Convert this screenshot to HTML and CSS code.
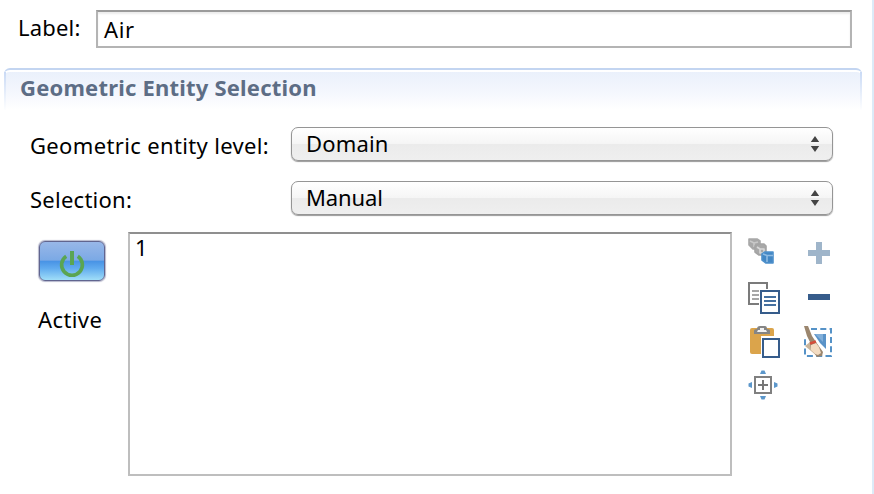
FILE: index.html
```html
<!DOCTYPE html>
<html lang="en">
<head>
<meta charset="utf-8">
<title>Geometric Entity Selection</title>
<link rel="stylesheet" href="styles.css">
</head>
<body>
<main class="panel">
  <div class="label-row">
    <span class="label-name">Label:</span>
    <div class="label-field"><span>Air</span></div>
  </div>
  <section class="section">
    <h2 class="section-title"><span>Geometric Entity Selection</span></h2>
    <div class="form-row">
      <span class="form-label level">Geometric entity level:</span>
      <div class="select"><span class="domain">Domain</span>
        <svg width="10" height="18" viewBox="0 0 10 18"><path d="M5 1L9.2 7H.8zM5 17L9.2 11H.8z" fill="#444"/></svg></div>
    </div>
    <div class="form-row">
      <span class="form-label selection">Selection:</span>
      <div class="select"><span class="manual">Manual</span>
        <svg width="10" height="18" viewBox="0 0 10 18"><path d="M5 1L9.2 7H.8zM5 17L9.2 11H.8z" fill="#444"/></svg></div>
    </div>
    <div class="selection-body">
      <div class="active">
        <div class="power">
          <svg width="28" height="30" viewBox="0 0 28 30" fill="none" stroke="#5aa552"><path d="M8.2 7.2A10.4 10.4 0 1 0 19.8 7.2" stroke-width="3.6"/><path d="M14 2V16" stroke-width="4"/></svg>
        </div>
        <span class="active-text">Active</span>
      </div>
      <div class="list">1</div>
      <div class="tools">
        <svg width="34" height="34" viewBox="0 0 34 34">
          <g stroke-width="1.6" stroke-linejoin="round">
            <path d="M2 2H10L13 4V10L10 12H6L2 8z" fill="#a8a8a8" stroke="#a8a8a8"/><path d="M3 4L7 6L11 5M7 6V10" stroke="#c8c8c8" fill="none"/>
            <path d="M8 9L12 7H17L19 9V16L16 18H12L8 15z" fill="#a8a8a8" stroke="#a4a4a4"/><path d="M10 10L13 12H17V16H13V12" stroke="#d8d8d8" fill="none"/>
            <path d="M15 17L18 15H26V26H19L15 23z" fill="#4387c4" stroke="#4e90cb"/><path d="M16 17L20 18.500H26M20 18.500V25" stroke="#8fbbe2" fill="none"/>
          </g>
        </svg>
        <svg width="34" height="34" viewBox="0 0 34 34"><path d="M12 5H18V13H26V19H18V27H12V19H4V13H12z" fill="#9fb5ca"/></svg>

        <svg width="34" height="34" viewBox="0 0 34 34">
          <path d="M2 2H20V23H2z" fill="#fff" stroke="#7b7b7b" stroke-width="2"/>
          <path d="M5 10H12M5 14H12M5 18H12" stroke="#8a8a8a" stroke-width="1.7"/>
          <path d="M12 8H33V33H12z" fill="#fff"/>
          <path d="M14 10H32V32H14z" fill="#fff" stroke="#365c8b" stroke-width="2"/>
          <path d="M17 16H29M17 20H29M17 24H29" stroke="#4570a0" stroke-width="2"/>
        </svg>
        <svg width="34" height="34" viewBox="0 0 34 34"><path d="M4 13H26V19H4z" fill="#365c8b"/></svg>

        <svg width="34" height="34" viewBox="0 0 34 34">
          <rect x="3" y="3" width="24" height="26" rx="2" fill="#dba44b"/>
          <path d="M7 9V6Q7 4 10 4Q10 1 13 1H18Q20 1 20 4Q23 4 23 6V9z" fill="#858585"/>
          <path d="M10 7H20L19 5H17V3H13V5H11z" fill="#f1f1f1"/>
          <path d="M14 11H33V33H14z" fill="#fff"/>
          <path d="M16 14H32V32H16z" fill="#fff" stroke="#365c8b" stroke-width="2"/>
        </svg>
        <svg width="34" height="34" viewBox="0 0 34 34">
          <path d="M7 4H27V31H1V12" fill="none" stroke="#5592c7" stroke-width="2" stroke-dasharray="6 3.3"/>
          <path d="M10 9H22V24L16 18z" fill="#5a93c8"/><path d="M11 9H19V17z" fill="#82afd9"/>
          <path d="M1 21L6 17L16 31H13z" fill="#c9b59b"/>
          <path d="M0 1H4L8 11L12 17L19 27L18 31L13 32L7 24L6 17L3 11z" fill="#9b866e"/>
          <path d="M7 20L12 18L15 22L17 28L14 30L11 29L7 25z" fill="#f3dcc2"/>
          <path d="M6 18.500L12 16.500" stroke="#d44e3b" stroke-width="2.500"/>
        </svg>

        <svg width="34" height="34" viewBox="0 0 34 34">
          <path d="M8 8H24V24H8z" fill="#fff" stroke="#808080" stroke-width="2"/>
          <path d="M16 11V21M11 16H21" stroke="#777" stroke-width="2"/>
          <path d="M14.500 1.500H17.500L19 5H13zM14.500 30.500H17.500L19 27H13zM1.500 14.500V17.500L5 19V13zM30.500 14.500V17.500L27 19V13z" fill="#5c97cb"/>
        </svg>
      </div>
    </div>
  </section>
</main>
</body>
</html>
```
FILE: styles.css
```css
* { box-sizing: border-box; }
body {
  margin: 0;
  background: #fff;
  color: #000;
  font: 22px/30px "Noto Sans", "Open Sans", sans-serif;
}
svg { display: block; }
.panel {
  width: 874px;
  height: 494px;
  padding: 10px 0 0 4px;
  border-right: 2px solid #dcebf8;
  overflow: hidden;
  white-space: nowrap;
}
.label-row { display: flex; height: 38px; padding-left: 14px; }
.label-name { width: 78px; padding-top: 2px; letter-spacing: .2px; }
.label-field {
  width: 756px;
  height: 38px;
  padding: 2px 0 0 6px;
  border: 2px solid #b4b4b4;
  border-top-color: #9b9b9b;
  box-shadow: inset 0 2px 2px #ededed;
  letter-spacing: .6px;
}
.section { margin-top: 20px; width: 858px; }
.section-title {
  position: relative;
  height: 42px;
  margin: 0;
  padding: 2px 0 0 16px;
  border-top: 2px solid #c3d5f1;
  border-radius: 6px 6px 0 0;
  background: linear-gradient(#e9f0fb, #f3f6fd 50%, #fff);
  box-shadow: inset 0 2px #fff;
  color: #5d6d85;
  font-size: 22px;
  font-weight: 700;
  line-height: 30px;
  letter-spacing: .2px;
}
.section-title::before {
  content: "";
  position: absolute;
  inset: 2px 0 0;
  border: solid;
  border-width: 0 2px;
  border-image: linear-gradient(#c8d9f5, #fff) 1;
}
.form-row { display: flex; height: 34px; padding-left: 26px; margin-top: 17px; }
.form-row + .form-row { margin-top: 20px; }
.form-label { width: 261px; padding-top: 3px; }
.level { letter-spacing: .35px; }
.selection { letter-spacing: .25px; }
.domain { letter-spacing: .15px; }
.manual { letter-spacing: -.1px; }
.select {
  display: flex;
  align-items: center;
  justify-content: space-between;
  width: 542px;
  height: 34px;
  padding: 0 12px 0 14px;
  border: 1px solid #959595;
  border-radius: 7px;
  background: linear-gradient(#fff, #f5f5f5 50%, #ebebeb 51%, #efefef);
  box-shadow: 0 1px 1px #999;
}
.select span { margin-top: -2px; }
.selection-body { display: flex; margin-top: 17px; }
.active {
  display: flex;
  flex-direction: column;
  align-items: flex-start;
  width: 124px;
  padding: 9px 0 0 34px;
}
.power {
  display: flex;
  justify-content: center;
  width: 66px;
  height: 40px;
  margin-left: 1px;
  padding-top: 7px;
  border: 1px solid #61658f;
  border-radius: 6px;
  background: linear-gradient(#98b7e8, #7ba9e5 48%, #4792e5 50%, #62acef 70%, #a0def8);
  box-shadow: 0 0 1px 1px #b5b7cc;
}
.active-text { margin-top: 23px; letter-spacing: .4px; }
.list {
  width: 604px;
  height: 244px;
  padding-left: 5px;
  border: 2px solid #bebebe;
  border-top-color: #8f8f8f;
  line-height: 26px;
}
.tools {
  display: grid;
  grid-template-columns: 34px 34px;
  grid-auto-rows: 34px;
  column-gap: 23px;
  row-gap: 10px;
  padding: 5px 0 0 15px;
}
```
